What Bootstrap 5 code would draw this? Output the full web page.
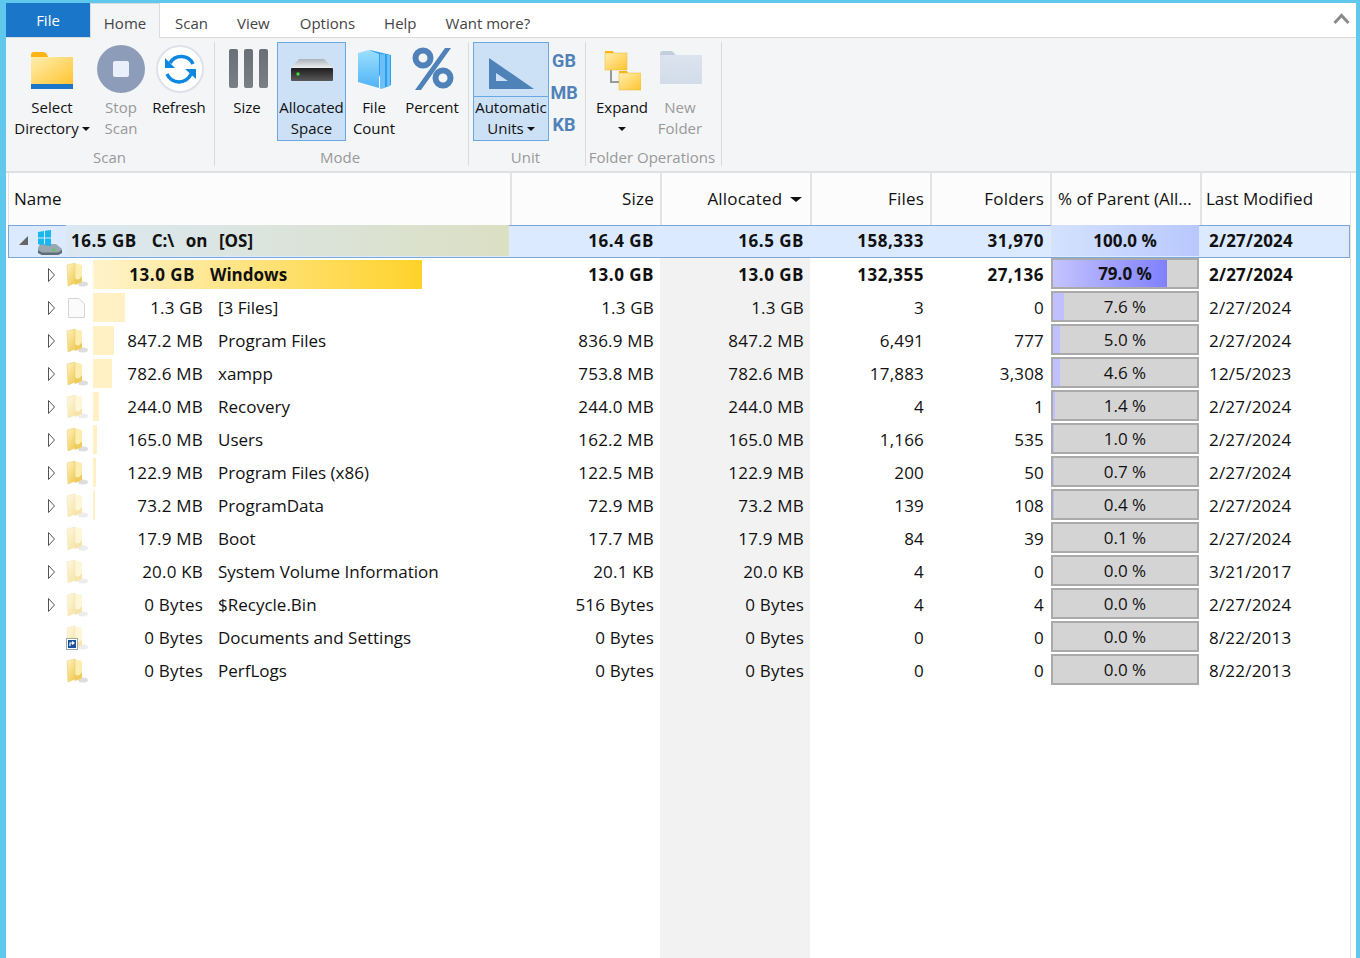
<!DOCTYPE html>
<html lang="en">
<head>
<meta charset="utf-8">
<title>WizTree</title>
<link href="https://cdn.jsdelivr.net/npm/bootstrap@5.3.0/dist/css/bootstrap.min.css" rel="stylesheet">
<style>
html,body{height:100%;overflow:hidden;background:#fff}
body{font-family:"Open Sans","Noto Sans",sans-serif;color:#111}
.win-frame{height:958px;border:solid #5fc8ec;border-width:3px 4px 0 6px;background:#fff}
.tab-strip{height:35px;background:#fff;border-bottom:1px solid #dadbdd;font-size:15px;color:#444}
.tab-file{width:84px;height:34px;background:#1a76c8;color:#fff;line-height:34px;text-align:center}
.tab-home{width:70px;height:35px;line-height:39px;text-align:center;background:#f4f5f7;border:1px solid #dadbdd;border-bottom:0}
.tab-item{line-height:40px}
.t1{margin-left:15px}.t2{margin-left:29px}.t3{margin-left:30px}.t4{margin-left:29px}.t5{margin-left:29px}
.chev{margin-right:6px;margin-top:9px}
.rb{height:135px;background:#f4f5f7;border-bottom:2px solid #dfe0e2;font-size:15px;line-height:21px}
.grp{height:124px;margin-top:4px;border-right:1px solid #dadbdd}
.g1{width:207px;margin-left:2px}.g2{width:254px}.g3{width:117px}.g4{width:136px}
.g2 .grp-btns{padding-left:2px}.g3 .grp-btns{padding-left:4px}.g4 .grp-btns{padding-left:8px}
.grp-btns{height:99px}
.grp-name{height:25px;line-height:33px;padding-right:3px;text-align:center;color:#999;white-space:nowrap}
.rbtn{height:99px;text-align:center;border:1px solid transparent;white-space:nowrap}
.rbtn svg{display:block;margin:0 auto}
.ico-slot{height:54px}
.on{background:#cce0f6;border-color:#6aa8e4}
.off{color:#999}
.caret-d{display:inline-block;width:0;height:0;border:4px solid transparent;border-top-color:#111;border-bottom:0;vertical-align:3px;margin-left:3px}
.split{height:54px;border-bottom:1px solid #6aa8e4}
.unit-col{width:30px;height:99px;padding-top:3px;font-family:"Roboto",sans-serif;font-weight:700;font-size:18px;color:#4f82b8;line-height:32px;text-align:center}
.w88{width:88px}.w50{width:50px}.w66{width:66px}.w60{width:60px}.w69{width:69px}.w56{width:56px}.w76{width:76px}
.tree-wrap{margin-left:2px;width:1343px;border-right:1px solid #e3e3e3}
.tree-wrap .table{table-layout:fixed;width:1342px;font-size:17px;--bs-table-bg:transparent;margin:0;border-collapse:separate;border-spacing:0;line-height:33px}
.tree-wrap .table>*>tr>*{padding:0 6px;height:33px;border:0;color:#111;font-weight:400;white-space:nowrap;background:transparent;box-shadow:none}
.tree-wrap .table>*>tr>.text-end,.tree-wrap .table>*>tr>.date-c,.sz{letter-spacing:.2px}
.tree-wrap .table>tbody>.bold>.text-end,.tree-wrap .table>tbody>.root>.text-end,.bold .sz,.root-size{letter-spacing:.5px}
.tree-wrap .table>thead>tr>th{height:51px;background:#fcfcfc;border-left:2px solid #e3e3e3;line-height:52px;overflow:hidden;letter-spacing:0}
.tree-wrap .table>thead>tr>th:first-child{border-left-width:1px;padding-left:5px}
.tree-wrap .table>thead>tr>.hdr-pct{padding-left:6px}
.tree-wrap .table>thead>tr>.hdr-date{padding-left:4px}
.tree-wrap .table>thead>tr>.hdr-alloc{padding-right:8px}
.tree-wrap .table>*>tr>.shade{background:#f2f2f2}
.tree-wrap .table>tbody>tr.root>*{background:#dbeaff;font-weight:700;box-shadow:inset 0 1px #7da7d8,inset 0 -1px #7da7d8;line-height:31px}
.tree-wrap .table>tbody>tr.root>*:first-child{box-shadow:inset 0 1px #7da7d8,inset 0 -1px #7da7d8,inset 1px 0 #7da7d8}
.tree-wrap .table>tbody>tr.root>*:last-child{box-shadow:inset 0 1px #7da7d8,inset 0 -1px #7da7d8,inset -1px 0 #7da7d8}
.tree-wrap .table>tbody>tr.bold>*{font-weight:700}
.tree-wrap .table>*>tr>.name-c{padding:0}
.tree-wrap .table>*>tr>.pct-c{padding:0 1px;text-align:center}
.tree-wrap .table>*>tr>.date-c{padding-left:9px}
.exp{width:20px;margin-left:38px;flex:none}
.fld{width:27px;flex:none}
.exp svg,.fld svg{display:block}
.label-box{position:relative;flex:1 1 auto;height:33px}
.size-bar{position:absolute;left:0;top:2px;height:29px;background:#fff1c4}
.size-bar.big{background:linear-gradient(90deg,#fff3cc,#ffd22a)}
.txt{position:relative;display:flex}
.sz{width:110px;text-align:right;margin-right:15px}
.bold .sz{width:102px}
.root-left{flex:none;width:58px;height:31px;padding-left:10px}
.root-left svg{display:block}
.root-name{height:31px;background:linear-gradient(90deg,#dbe8f3,#dbdfc3);padding-left:5px;width:443px;display:flex;gap:15px}
.root-name span+span{word-spacing:7px}
.pct-track{height:31px;border:2px solid #aaa;background:#d4d4d4;position:relative;line-height:28px}
.pct-fill{position:absolute;left:0;top:0;bottom:0;background:#c0c0ff}
.pct-fill.big{background:linear-gradient(90deg,#c4c4ff,#8080ff)}
.pct-lab{position:relative}
.pct-root{height:31px;background:linear-gradient(90deg,#d4e2fe,#b8c8fe);line-height:31px}
.fill-row>td{height:271px!important}
.hid{opacity:.5}
</style>
</head>
<body>
<svg width="0" height="0" class="position-absolute">
 <defs>
  <linearGradient id="gFold" x1="0" y1="0" x2=".6" y2="1"><stop offset="0" stop-color="#fff3c4"/><stop offset="1" stop-color="#f2cf60"/></linearGradient>
  <linearGradient id="gBig" x1="0" y1="0" x2="1" y2="1"><stop offset="0" stop-color="#ffeeb0"/><stop offset="1" stop-color="#ffc42e"/></linearGradient>
  <linearGradient id="gBar" x1="0" y1="0" x2="0" y2="1"><stop offset="0" stop-color="#6a6e76"/><stop offset="1" stop-color="#7a7e86"/></linearGradient>
  <linearGradient id="gHdd" x1="0" y1="0" x2="0" y2="1"><stop offset="0" stop-color="#1e1e1e"/><stop offset="1" stop-color="#5a5a5a"/></linearGradient>
  <linearGradient id="gTop" x1="0" y1="0" x2="0" y2="1"><stop offset="0" stop-color="#aab2ba"/><stop offset="1" stop-color="#eef0f2"/></linearGradient>
  <linearGradient id="gStack" x1="0" y1="0" x2="0" y2="1"><stop offset="0" stop-color="#9ddfff"/><stop offset="1" stop-color="#4fb3f6"/></linearGradient>
  <linearGradient id="gNew" x1="0" y1="0" x2="0" y2="1"><stop offset="0" stop-color="#dbe3ee"/><stop offset="1" stop-color="#d2dce9"/></linearGradient>
  <symbol id="folderS" viewBox="0 0 27 33">
   <ellipse cx="17" cy="26" rx="5" ry="2.500" fill="#aaa" opacity=".4"/>
   <path d="M8 5 16 7V24L8 27Z" fill="#fdeeb0"/>
   <path d="M9 20Q12 24 16 18V24L9 27Z" fill="#eecb5c"/>
   <path d="M1 7 9 5V25L2 28Z" fill="url(#gFold)" stroke="#e6c868" stroke-width=".5"/>
  </symbol>
  <symbol id="expArrow" viewBox="0 0 20 33"><path d="M2.500 10.500V23.500L8.500 17Z" fill="#fff" stroke="#555"/></symbol>
 </defs>
</svg>
<div class="win-frame d-flex flex-column">
 <div class="tab-strip d-flex flex-shrink-0">
  <div class="tab-file">File</div>
  <div class="tab-home">Home</div>
  <div class="tab-item t1">Scan</div>
  <div class="tab-item t2">View</div>
  <div class="tab-item t3">Options</div>
  <div class="tab-item t4">Help</div>
  <div class="tab-item t5">Want more?</div>
  <svg class="chev ms-auto" width="17" height="13" viewBox="0 0 17 13"><path d="M1.500 11 8.500 3.500 15.500 11" fill="none" stroke="#8a8a8a" stroke-width="3"/></svg>
 </div>

 <div class="rb d-flex flex-shrink-0">
  <div class="grp g1">
   <div class="grp-btns d-flex">
    <div class="rbtn w88">
     <div class="ico-slot"><svg width="44" height="54" viewBox="0 0 44 54"><path d="M1 12Q1 9 4 9H13Q15 9 17 11L18 14H1Z" fill="#fdb515"/><path d="M1 14H43V42H1Z" fill="url(#gBig)"/><path d="M1 41H43V46H1Z" fill="#1a76c8"/></svg></div>
     <div>Select<br>Directory<span class="caret-d"></span></div>
    </div>
    <div class="rbtn w50 off">
     <div class="ico-slot"><svg width="48" height="54" viewBox="0 0 48 54"><circle cx="24" cy="26" r="24" fill="#8d9cb8"/><rect x="16" y="18" width="16" height="16" rx="2" fill="#eaf0fb"/></svg></div>
     <div>Stop<br>Scan</div>
    </div>
    <div class="rbtn w66">
     <div class="ico-slot"><svg width="50" height="54" viewBox="-1 0 50 54"><circle cx="25" cy="26" r="23" fill="#fff" stroke="#dfe1e8" stroke-width="2"/><path d="M15 20A13 13 0 0 1 38 21" fill="none" stroke="#0c88e0" stroke-width="3.500"/><path d="M10 15V25H20Z" fill="#0c88e0"/><path d="M12 31A13 13 0 0 0 36 31" fill="none" stroke="#0c88e0" stroke-width="3.500"/><path d="M41 36V26H30Z" fill="#0c88e0"/></svg></div>
     <div>Refresh</div>
    </div>
   </div>
   <div class="grp-name">Scan</div>
  </div>
  <div class="grp g2">
   <div class="grp-btns d-flex">
    <div class="rbtn w60">
     <div class="ico-slot"><svg width="42" height="54" viewBox="0 0 42 54"><rect x="3" y="6" width="9" height="39" rx="2" fill="url(#gBar)"/><rect x="18" y="6" width="9" height="39" rx="2" fill="url(#gBar)"/><rect x="33" y="6" width="9" height="39" rx="2" fill="url(#gBar)"/></svg></div>
     <div>Size</div>
    </div>
    <div class="rbtn w69 on">
     <div class="ico-slot"><svg width="44" height="54" viewBox="0 0 44 54"><path d="M9 16H34L43 25H1Z" fill="url(#gTop)"/><rect x="1" y="25" width="42" height="13" rx="1" fill="url(#gHdd)"/><circle cx="8" cy="31" r="1.700" fill="#3dde3d"/></svg></div>
     <div>Allocated<br>Space</div>
    </div>
    <div class="rbtn w56">
     <div class="ico-slot"><svg width="36" height="54" viewBox="0 0 36 54"><path d="M14 7 35 12V42L28 45Z" fill="#2f9df0"/><path d="M24 11H29V45L24 46Z" fill="#6cc0f8"/><path d="M31 12H34V43L31 44Z" fill="#6cc0f8"/><path d="M2 10 13 7 23 11V45L2 39Z" fill="url(#gStack)"/></svg></div>
     <div>File<br>Count</div>
    </div>
    <div class="rbtn w60">
     <div class="ico-slot"><svg width="44" height="54" viewBox="0 0 44 54"><circle cx="13" cy="15" r="7.500" fill="none" stroke="#4f82b8" stroke-width="6"/><circle cx="33" cy="35" r="7.500" fill="none" stroke="#4f82b8" stroke-width="6"/><path d="M35 5H41L11 47H5Z" fill="#4f82b8"/></svg></div>
     <div>Percent</div>
    </div>
   </div>
   <div class="grp-name">Mode</div>
  </div>
  <div class="grp g3">
   <div class="grp-btns d-flex">
    <div class="rbtn w76 on p-0">
     <div class="split"><svg width="46" height="53" viewBox="0 0 46 53"><path fill-rule="evenodd" d="M1 15 46 46H1ZM8 30V38H20Z" fill="#4f82b8"/></svg></div>
     <div>Automatic<br>Units<span class="caret-d"></span></div>
    </div>
    <div class="unit-col"><div>GB</div><div>MB</div><div>KB</div></div>
   </div>
   <div class="grp-name">Unit</div>
  </div>
  <div class="grp g4">
   <div class="grp-btns d-flex">
    <div class="rbtn w56">
     <div class="ico-slot"><svg width="38" height="54" viewBox="-2 0 38 54"><path d="M6 24V39H16" fill="none" stroke="#999" stroke-width="2"/><path d="M0 8H8L9 10H0Z" fill="#fdb515"/><rect x="0" y="10" width="22" height="17" fill="url(#gBig)" stroke="#e8b838" stroke-width=".5"/><path d="M14 28H22L23 30H14Z" fill="#fdb515"/><rect x="14" y="30" width="22" height="17" fill="url(#gBig)" stroke="#e8b838" stroke-width=".5"/></svg></div>
     <div>Expand<br><span class="caret-d m-0"></span></div>
    </div>
    <div class="rbtn w60 off">
     <div class="ico-slot"><svg width="44" height="54" viewBox="-2 0 44 54"><path d="M0 11Q0 8 3 8H12L17 13H0Z" fill="#c3cedd"/><rect x="0" y="12" width="42" height="29" rx="1" fill="url(#gNew)"/></svg></div>
     <div>New<br>Folder</div>
    </div>
   </div>
   <div class="grp-name">Folder Operations</div>
  </div>
 </div>

 <div class="tree-wrap flex-grow-1">
  <table class="table">
   <colgroup><col style="width:502px"><col style="width:150px"><col style="width:150px"><col style="width:120px"><col style="width:120px"><col style="width:150px"><col style="width:150px"></colgroup>
   <thead><tr>
    <th>Name</th><th class="text-end">Size</th><th class="text-end hdr-alloc">Allocated <span class="caret-d" style="border-width:5px 6px 0;vertical-align:3px"></span></th><th class="text-end">Files</th><th class="text-end">Folders</th><th class="hdr-pct">% of Parent (All...</th><th class="hdr-date">Last Modified</th>
   </tr></thead>
   <tbody>
    <tr class="root">
     <td class="name-c"><div class="d-flex">
      <div class="root-left"><svg width="48" height="31" viewBox="0 0 48 31"><path d="M1 20 10 11V20Z" fill="#666"/><path d="M22 19H38L44 24V28L40 30H24L20 28V23Z" fill="#9aa6b0"/><path d="M20 25 24 27.500H40L44 25V28L40 30H24L20 28Z" fill="#5f6d78"/><circle cx="36" cy="25" r="1.200" fill="#3dde3d"/><path d="M20 7 26 6V12.500H20ZM27 5.800 33 5V12.500H27ZM20 13.500H26V20L20 19.200ZM27 13.500H33V21L27 20.200Z" fill="#19b7ec"/></svg></div>
      <div class="root-name"><span class="root-size">16.5 GB</span><span>C:\ on [OS]</span></div></div></td>
     <td class="text-end">16.4 GB</td><td class="text-end">16.5 GB</td><td class="text-end">158,333</td><td class="text-end">31,970</td>
     <td class="pct-c"><div class="pct-root">100.0 %</div></td><td class="date-c">2/27/2024</td>
    </tr>
    <tr class="bold">
     <td class="name-c"><div class="d-flex"><div class="exp"><svg width="20" height="33"><use href="#expArrow"/></svg></div><div class="fld"><svg width="27" height="33"><use href="#folderS"/></svg></div><div class="label-box"><div class="size-bar big" style="width:329px"></div><div class="txt"><span class="sz">13.0 GB</span><span>Windows</span></div></div></div></td>
     <td class="text-end">13.0 GB</td><td class="text-end shade">13.0 GB</td><td class="text-end">132,355</td><td class="text-end">27,136</td>
     <td class="pct-c"><div class="pct-track"><div class="pct-fill big" style="width:79%"></div><span class="pct-lab">79.0 %</span></div></td><td class="date-c">2/27/2024</td>
    </tr>
    <tr>
     <td class="name-c"><div class="d-flex"><div class="exp"><svg width="20" height="33"><use href="#expArrow"/></svg></div><div class="fld"><svg width="27" height="33" viewBox="0 0 27 33"><path d="M2.500 7.500H13L18.500 13V26.500H2.500Z" fill="#fbfbfb" stroke="#d5d5d5"/></svg></div><div class="label-box"><div class="size-bar" style="width:32px"></div><div class="txt"><span class="sz">1.3 GB</span><span>[3 Files]</span></div></div></div></td>
     <td class="text-end">1.3 GB</td><td class="text-end shade">1.3 GB</td><td class="text-end">3</td><td class="text-end">0</td>
     <td class="pct-c"><div class="pct-track"><div class="pct-fill" style="width:7.6%"></div><span class="pct-lab">7.6 %</span></div></td><td class="date-c">2/27/2024</td>
    </tr>
    <tr>
     <td class="name-c"><div class="d-flex"><div class="exp"><svg width="20" height="33"><use href="#expArrow"/></svg></div><div class="fld"><svg width="27" height="33"><use href="#folderS"/></svg></div><div class="label-box"><div class="size-bar" style="width:21px"></div><div class="txt"><span class="sz">847.2 MB</span><span>Program Files</span></div></div></div></td>
     <td class="text-end">836.9 MB</td><td class="text-end shade">847.2 MB</td><td class="text-end">6,491</td><td class="text-end">777</td>
     <td class="pct-c"><div class="pct-track"><div class="pct-fill" style="width:5%"></div><span class="pct-lab">5.0 %</span></div></td><td class="date-c">2/27/2024</td>
    </tr>
    <tr>
     <td class="name-c"><div class="d-flex"><div class="exp"><svg width="20" height="33"><use href="#expArrow"/></svg></div><div class="fld"><svg width="27" height="33"><use href="#folderS"/></svg></div><div class="label-box"><div class="size-bar" style="width:19px"></div><div class="txt"><span class="sz">782.6 MB</span><span>xampp</span></div></div></div></td>
     <td class="text-end">753.8 MB</td><td class="text-end shade">782.6 MB</td><td class="text-end">17,883</td><td class="text-end">3,308</td>
     <td class="pct-c"><div class="pct-track"><div class="pct-fill" style="width:4.6%"></div><span class="pct-lab">4.6 %</span></div></td><td class="date-c">12/5/2023</td>
    </tr>
    <tr>
     <td class="name-c"><div class="d-flex"><div class="exp"><svg width="20" height="33"><use href="#expArrow"/></svg></div><div class="fld hid"><svg width="27" height="33"><use href="#folderS"/></svg></div><div class="label-box"><div class="size-bar" style="width:6px"></div><div class="txt"><span class="sz">244.0 MB</span><span>Recovery</span></div></div></div></td>
     <td class="text-end">244.0 MB</td><td class="text-end shade">244.0 MB</td><td class="text-end">4</td><td class="text-end">1</td>
     <td class="pct-c"><div class="pct-track"><div class="pct-fill" style="width:1.4%"></div><span class="pct-lab">1.4 %</span></div></td><td class="date-c">2/27/2024</td>
    </tr>
    <tr>
     <td class="name-c"><div class="d-flex"><div class="exp"><svg width="20" height="33"><use href="#expArrow"/></svg></div><div class="fld"><svg width="27" height="33"><use href="#folderS"/></svg></div><div class="label-box"><div class="size-bar" style="width:4px"></div><div class="txt"><span class="sz">165.0 MB</span><span>Users</span></div></div></div></td>
     <td class="text-end">162.2 MB</td><td class="text-end shade">165.0 MB</td><td class="text-end">1,166</td><td class="text-end">535</td>
     <td class="pct-c"><div class="pct-track"><div class="pct-fill" style="width:1%"></div><span class="pct-lab">1.0 %</span></div></td><td class="date-c">2/27/2024</td>
    </tr>
    <tr>
     <td class="name-c"><div class="d-flex"><div class="exp"><svg width="20" height="33"><use href="#expArrow"/></svg></div><div class="fld"><svg width="27" height="33"><use href="#folderS"/></svg></div><div class="label-box"><div class="size-bar" style="width:3px"></div><div class="txt"><span class="sz">122.9 MB</span><span>Program Files (x86)</span></div></div></div></td>
     <td class="text-end">122.5 MB</td><td class="text-end shade">122.9 MB</td><td class="text-end">200</td><td class="text-end">50</td>
     <td class="pct-c"><div class="pct-track"><div class="pct-fill" style="width:.7%"></div><span class="pct-lab">0.7 %</span></div></td><td class="date-c">2/27/2024</td>
    </tr>
    <tr>
     <td class="name-c"><div class="d-flex"><div class="exp"><svg width="20" height="33"><use href="#expArrow"/></svg></div><div class="fld hid"><svg width="27" height="33"><use href="#folderS"/></svg></div><div class="label-box"><div class="size-bar" style="width:2px"></div><div class="txt"><span class="sz">73.2 MB</span><span>ProgramData</span></div></div></div></td>
     <td class="text-end">72.9 MB</td><td class="text-end shade">73.2 MB</td><td class="text-end">139</td><td class="text-end">108</td>
     <td class="pct-c"><div class="pct-track"><div class="pct-fill" style="width:.4%"></div><span class="pct-lab">0.4 %</span></div></td><td class="date-c">2/27/2024</td>
    </tr>
    <tr>
     <td class="name-c"><div class="d-flex"><div class="exp"><svg width="20" height="33"><use href="#expArrow"/></svg></div><div class="fld hid"><svg width="27" height="33"><use href="#folderS"/></svg></div><div class="label-box"><div class="txt"><span class="sz">17.9 MB</span><span>Boot</span></div></div></div></td>
     <td class="text-end">17.7 MB</td><td class="text-end shade">17.9 MB</td><td class="text-end">84</td><td class="text-end">39</td>
     <td class="pct-c"><div class="pct-track"><span class="pct-lab">0.1 %</span></div></td><td class="date-c">2/27/2024</td>
    </tr>
    <tr>
     <td class="name-c"><div class="d-flex"><div class="exp"><svg width="20" height="33"><use href="#expArrow"/></svg></div><div class="fld hid"><svg width="27" height="33"><use href="#folderS"/></svg></div><div class="label-box"><div class="txt"><span class="sz">20.0 KB</span><span>System Volume Information</span></div></div></div></td>
     <td class="text-end">20.1 KB</td><td class="text-end shade">20.0 KB</td><td class="text-end">4</td><td class="text-end">0</td>
     <td class="pct-c"><div class="pct-track"><span class="pct-lab">0.0 %</span></div></td><td class="date-c">3/21/2017</td>
    </tr>
    <tr>
     <td class="name-c"><div class="d-flex"><div class="exp"><svg width="20" height="33"><use href="#expArrow"/></svg></div><div class="fld hid"><svg width="27" height="33"><use href="#folderS"/></svg></div><div class="label-box"><div class="txt"><span class="sz">0 Bytes</span><span>$Recycle.Bin</span></div></div></div></td>
     <td class="text-end">516 Bytes</td><td class="text-end shade">0 Bytes</td><td class="text-end">4</td><td class="text-end">4</td>
     <td class="pct-c"><div class="pct-track"><span class="pct-lab">0.0 %</span></div></td><td class="date-c">2/27/2024</td>
    </tr>
    <tr>
     <td class="name-c"><div class="d-flex"><div class="exp"></div><div class="fld"><svg width="27" height="33" viewBox="0 0 27 33"><g opacity=".5"><use href="#folderS" width="27" height="33"/></g><rect x="0.500" y="17.500" width="11" height="11" fill="#fff" stroke="#9aa"/><rect x="2" y="19" width="8" height="8" fill="#1c4f9c"/><path d="M4 25V22H8M6 20.500 8 22 6 23.500" fill="none" stroke="#fff" stroke-width="1.200"/></svg></div><div class="label-box"><div class="txt"><span class="sz">0 Bytes</span><span>Documents and Settings</span></div></div></div></td>
     <td class="text-end">0 Bytes</td><td class="text-end shade">0 Bytes</td><td class="text-end">0</td><td class="text-end">0</td>
     <td class="pct-c"><div class="pct-track"><span class="pct-lab">0.0 %</span></div></td><td class="date-c">8/22/2013</td>
    </tr>
    <tr>
     <td class="name-c"><div class="d-flex"><div class="exp"></div><div class="fld"><svg width="27" height="33"><use href="#folderS"/></svg></div><div class="label-box"><div class="txt"><span class="sz">0 Bytes</span><span>PerfLogs</span></div></div></div></td>
     <td class="text-end">0 Bytes</td><td class="text-end shade">0 Bytes</td><td class="text-end">0</td><td class="text-end">0</td>
     <td class="pct-c"><div class="pct-track"><span class="pct-lab">0.0 %</span></div></td><td class="date-c">8/22/2013</td>
    </tr>
    <tr class="fill-row"><td></td><td></td><td class="shade"></td><td></td><td></td><td></td><td></td></tr>
   </tbody>
  </table>
 </div>
</div>
<script src="https://cdn.jsdelivr.net/npm/bootstrap@5.3.0/dist/js/bootstrap.bundle.min.js"></script>
</body>
</html>
